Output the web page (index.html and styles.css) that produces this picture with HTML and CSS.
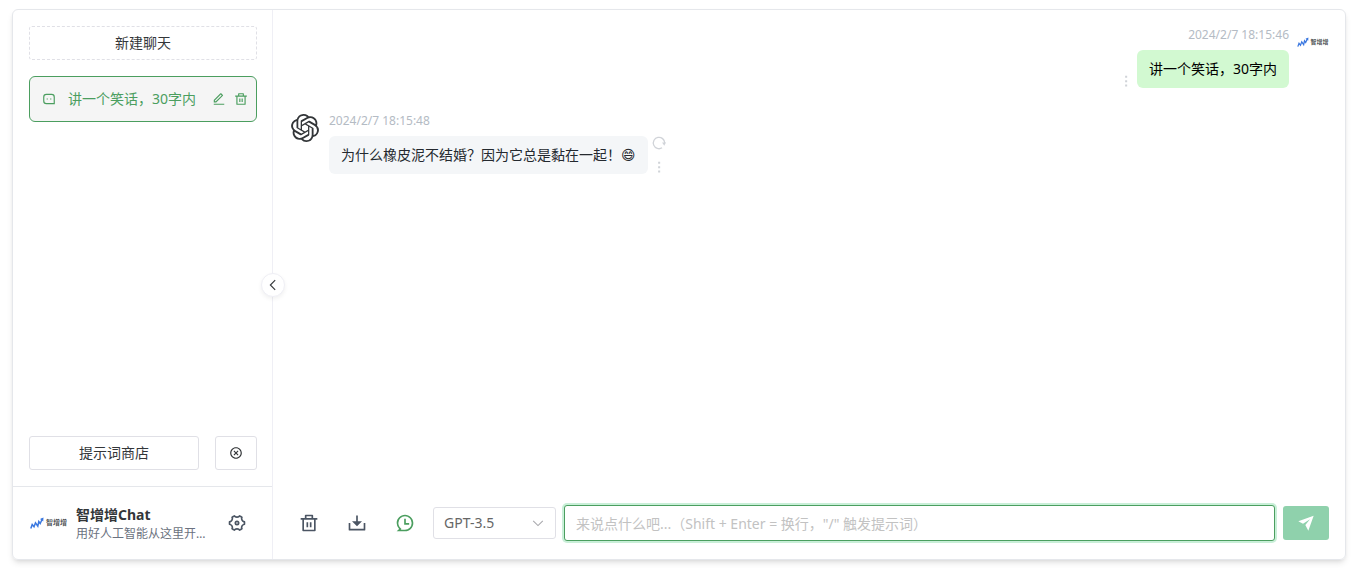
FILE: index.html
```html
<!DOCTYPE html>
<html lang="zh-CN">
<head>
  <meta charset="UTF-8">
  <meta name="viewport" content="width=device-width, initial-scale=1">
  <title>智增增Chat</title>
  <link rel="stylesheet" href="styles.css">
</head>
<body>
  <!-- shared icons -->
  <svg class="sprite" aria-hidden="true">
    <symbol id="icon-trash" viewBox="0 0 24 24">
      <path d="M17 6h5v2h-2v13a1 1 0 0 1-1 1H5a1 1 0 0 1-1-1V8H2V6h5V3a1 1 0 0 1 1-1h8a1 1 0 0 1 1 1v3Zm1 2H6v12h12V8Zm-9 3h2v6H9v-6Zm4 0h2v6h-2v-6ZM9 4v2h6V4H9Z"/>
    </symbol>
    <symbol id="icon-more" viewBox="0 0 24 24">
      <path d="M10.500 3h3.500v3.500h-3.500zM10.500 10.500h3.500v3.500h-3.500zM10.500 18h3.500v3.500h-3.500z"/>
    </symbol>
    <symbol id="brand-mark" viewBox="0 0 14 12">
      <path d="M0.800 11.500 2.200 7.500 4 9.800 5.500 5.800 7.800 9.200 8.800 4.500 10.200 6.500 12.500 1.500" fill="none" stroke="#3b78e0" stroke-width="1.500"/>
      <path d="M10 2 13.500 0.500 13.200 4.500Z" fill="#3b78e0"/>
    </symbol>
  </svg>

  <div class="app">
    <aside class="sidebar">
      <div class="sidebar-top">
        <button class="btn btn-dashed" type="button">新建聊天</button>
        <div class="chat-item">
          <svg class="icon" viewBox="0 0 24 24"><path d="M2 8.500A5.500 5.500 0 0 1 7.500 3h9A5.500 5.500 0 0 1 22 8.500V21H7.500A5.500 5.500 0 0 1 2 15.500v-7ZM20 19V8.500A3.500 3.500 0 0 0 16.500 5h-9A3.500 3.500 0 0 0 4 8.500v7A3.500 3.500 0 0 0 7.500 19H20Zm-6-8h2v2h-2v-2Zm-6 0h2v2H8v-2Z"/></svg>
          <a class="chat-title" href="#">讲一个笑话，30字内</a>
          <div class="chat-tools">
            <button class="icon-btn" type="button" aria-label="编辑">
              <svg class="icon" viewBox="0 0 24 24"><path d="M6.414 16 16.556 5.858l-1.414-1.414L5 14.586V16h1.414Zm.829 2H3v-4.243L14.435 2.322a1 1 0 0 1 1.414 0l2.829 2.829a1 1 0 0 1 0 1.414L7.243 18ZM3 20h18v2H3v-2Z"/></svg>
            </button>
            <button class="icon-btn" type="button" aria-label="删除">
              <svg class="icon"><use href="#icon-trash"/></svg>
            </button>
          </div>
        </div>
      </div>

      <div class="sidebar-actions">
        <button class="btn btn-store" type="button">提示词商店</button>
        <button class="btn btn-clear" type="button" aria-label="清空">
          <svg class="icon" viewBox="0 0 24 24"><path d="M12 22C6.477 22 2 17.523 2 12S6.477 2 12 2s10 4.477 10 10-4.477 10-10 10Zm0-2a8 8 0 1 0 0-16 8 8 0 0 0 0 16Zm0-9.414 2.828-2.829 1.415 1.415L13.414 12l2.829 2.828-1.415 1.415L12 13.414l-2.828 2.829-1.415-1.415L10.586 12 7.757 9.172l1.415-1.415L12 10.586Z"/></svg>
        </button>
      </div>

      <div class="sidebar-footer">
        <div class="brand brand-lg">
          <svg class="brand-mark"><use href="#brand-mark"/></svg>
          <span>智增增</span>
        </div>
        <div class="user-info">
          <div class="user-name">智增增Chat</div>
          <div class="user-desc">用好人工智能从这里开始吧</div>
        </div>
        <button class="tool-btn" type="button" aria-label="设置">
          <svg class="icon-lg" viewBox="0 0 24 24"><path d="M2 12c0-.865.11-1.703.316-2.504A3 3 0 0 0 4.990 4.867a9.990 9.990 0 0 1 4.335-2.505 3 3 0 0 0 5.348 0 9.990 9.990 0 0 1 4.335 2.505 3 3 0 0 0 2.675 4.630c.206.8.316 1.638.316 2.503 0 .864-.11 1.702-.316 2.503a3 3 0 0 0-2.675 4.629 9.990 9.990 0 0 1-4.335 2.505 3 3 0 0 0-5.348 0 9.990 9.990 0 0 1-4.335-2.505 3 3 0 0 0-2.675-4.630C2.110 13.703 2 12.864 2 12Zm4.804 3c.63 1.091.81 2.346.564 3.524.408.29.842.541 1.297.75A4.993 4.993 0 0 1 12 18c1.260 0 2.438.471 3.335 1.274.455-.209.889-.46 1.297-.75A4.990 4.990 0 0 1 17.196 15a4.993 4.993 0 0 1 2.770-2.250 8.126 8.126 0 0 0 0-1.500A4.993 4.993 0 0 1 17.195 9a4.990 4.990 0 0 1-.564-3.524 7.989 7.989 0 0 0-1.297-.75A4.993 4.993 0 0 1 12 6a4.993 4.993 0 0 1-3.335-1.274 7.990 7.990 0 0 0-1.297.75A4.990 4.990 0 0 1 6.804 9a4.993 4.993 0 0 1-2.770 2.250 8.126 8.126 0 0 0 0 1.500A4.993 4.993 0 0 1 6.805 15ZM12 15a3 3 0 1 1 0-6 3 3 0 0 1 0 6Zm0-2a1 1 0 1 0 0-2 1 1 0 0 0 0 2Z"/></svg>
        </button>
      </div>

      <button class="collapse-btn" type="button" aria-label="收起">
        <svg class="icon" viewBox="0 0 16 16"><path d="M10.500 2.500 5 8l5.500 5.500" fill="none" stroke="currentColor" stroke-width="1.300"/></svg>
      </button>
    </aside>

    <main class="main">
      <div class="messages">
        <div class="message message-user">
          <div class="avatar">
            <div class="brand">
              <svg class="brand-mark"><use href="#brand-mark"/></svg>
              <span>智增增</span>
            </div>
          </div>
          <div class="message-body">
            <time class="message-time">2024/2/7 18:15:46</time>
            <div class="message-row">
              <div class="bubble">讲一个笑话，30字内</div>
              <div class="message-tools">
                <button class="icon-btn" type="button" aria-label="更多"><svg class="icon"><use href="#icon-more"/></svg></button>
              </div>
            </div>
          </div>
        </div>

        <div class="message">
          <div class="avatar">
            <svg class="gpt-logo" viewBox="0 0 24 24"><path d="M22.2819 9.8211a5.9847 5.9847 0 0 0-.5157-4.9108 6.0462 6.0462 0 0 0-6.5098-2.9A6.0651 6.0651 0 0 0 4.9807 4.1818a5.9847 5.9847 0 0 0-3.9977 2.9 6.0462 6.0462 0 0 0 .7427 7.0966 5.98 5.98 0 0 0 .511 4.9107 6.051 6.051 0 0 0 6.5146 2.9001A5.9847 5.9847 0 0 0 13.2599 24a6.0557 6.0557 0 0 0 5.7718-4.2058 5.9894 5.9894 0 0 0 3.9977-2.9001 6.0557 6.0557 0 0 0-.7475-7.0729zm-9.022 12.6081a4.4755 4.4755 0 0 1-2.8764-1.0408l.1419-.0804 4.7783-2.7582a.7948.7948 0 0 0 .3927-.6813v-6.7369l2.02 1.1686a.071.071 0 0 1 .038.052v5.5826a4.504 4.504 0 0 1-4.4945 4.4944zm-9.6607-4.1254a4.4708 4.4708 0 0 1-.5346-3.0137l.142.0852 4.783 2.7582a.7712.7712 0 0 0 .7806 0l5.8428-3.3685v2.3324a.0804.0804 0 0 1-.0332.0615L9.74 19.9502a4.4992 4.4992 0 0 1-6.1408-1.6464zM2.3408 7.8956a4.485 4.485 0 0 1 2.3655-1.9728V11.6a.7664.7664 0 0 0 .3879.6765l5.8144 3.3543-2.0201 1.1685a.0757.0757 0 0 1-.071 0l-4.8303-2.7865A4.504 4.504 0 0 1 2.3408 7.872zm16.5963 3.8558L13.1038 8.364 15.1192 7.2a.0757.0757 0 0 1 .071 0l4.8303 2.7913a4.4944 4.4944 0 0 1-.6765 8.1042v-5.6772a.79.79 0 0 0-.407-.667zm2.0107-3.0231l-.142-.0852-4.7735-2.7818a.7759.7759 0 0 0-.7854 0L9.409 9.2297V6.8974a.0662.0662 0 0 1 .0284-.0615l4.8303-2.7866a4.4992 4.4992 0 0 1 6.6802 4.66zM8.3065 12.863l-2.02-1.1638a.0804.0804 0 0 1-.038-.0567V6.0742a4.4992 4.4992 0 0 1 7.3757-3.4537l-.142.0805L8.704 5.459a.7948.7948 0 0 0-.3927.6813zm1.0976-2.3654l2.602-1.4998 2.6069 1.4998v2.9994l-2.5974 1.4997-2.6067-1.4997Z"/></svg>
          </div>
          <div class="message-body">
            <time class="message-time">2024/2/7 18:15:48</time>
            <div class="message-row">
              <div class="bubble">为什么橡皮泥不结婚？因为它总是黏在一起！<span class="emoji">😄</span></div>
              <div class="message-tools">
                <button class="icon-btn" type="button" aria-label="重新生成">
                  <svg class="icon" viewBox="0 0 16 16"><path d="M11.500 13.500A6.500 6.500 0 1 1 14.500 8" fill="none" stroke="currentColor" stroke-width="1.500"/><path d="M11.500 7.500h4.500L14 11Z"/></svg>
                </button>
                <button class="icon-btn" type="button" aria-label="更多"><svg class="icon"><use href="#icon-more"/></svg></button>
              </div>
            </div>
          </div>
        </div>
      </div>

      <form class="composer">
        <button class="tool-btn" type="button" aria-label="清空会话"><svg class="icon-lg"><use href="#icon-trash"/></svg></button>
        <button class="tool-btn" type="button" aria-label="导出">
          <svg class="icon-lg" viewBox="0 0 24 24"><path d="M13 10h5l-6 6-6-6h5V3h2v7Zm-9 9h16v-7h2v8a1 1 0 0 1-1 1H3a1 1 0 0 1-1-1v-8h2v7Z"/></svg>
        </button>
        <button class="tool-btn tool-btn-active" type="button" aria-label="上下文">
          <svg class="icon-lg" viewBox="0 0 24 24"><path d="M12 2c5.523 0 10 4.477 10 10s-4.477 10-10 10H2l2.929-2.929A9.969 9.969 0 0 1 2 12C2 6.477 6.477 2 12 2Zm0 2a8 8 0 0 0-8 8c0 2.152.851 4.165 2.343 5.657l1.414 1.414-.929.929H12a8 8 0 1 0 0-16Zm1 3v5h4v2h-6V7h2Z"/></svg>
        </button>
        <div class="model-select">
          <select aria-label="模型">
            <option>GPT-3.5</option>
          </select>
          <svg class="icon" viewBox="0 0 16 16"><path d="M2.500 5.500 8 11 13.500 5.500" fill="none" stroke="currentColor" stroke-width="1.200"/></svg>
        </div>
        <input class="prompt" type="text" aria-label="消息" placeholder='来说点什么吧...（Shift + Enter = 换行，"/" 触发提示词）'>
        <button class="send" type="submit" aria-label="发送">
          <svg class="icon-send" viewBox="0 0 24 24"><path d="M23.500 1 0.500 9.500 7.500 13 18 6.500 11 15 15.500 23.500Z"/></svg>
        </button>
      </form>
    </main>
  </div>
</body>
</html>
```

FILE: styles.css
```css
* {
  box-sizing: border-box;
}

body {
  margin: 0;
  height: 100vh;
  padding: 9px 5px 8px 12px;
  background: #fff;
  color: #333639;
  font-family: "Noto Sans", "Noto Sans CJK SC", sans-serif;
  font-size: 14px;
  line-height: 22px;
}

button, input, select {
  margin: 0;
  padding: 0;
  font: inherit;
  color: inherit;
}

button {
  display: flex;
  align-items: center;
  justify-content: center;
  background: none;
  border: none;
  cursor: pointer;
}

svg {
  display: block;
  fill: currentColor;
}

.sprite {
  position: absolute;
  width: 0;
  height: 0;
}

.icon {
  width: 14px;
  height: 14px;
}

.icon-lg {
  width: 20px;
  height: 20px;
}

.app {
  display: flex;
  height: 100%;
  border: 1px solid #e5e7eb;
  border-radius: 6px;
  box-shadow: 0 4px 6px -1px rgba(0, 0, 0, 0.1), 0 2px 4px -2px rgba(0, 0, 0, 0.1);
}

/* sidebar */
.sidebar {
  position: relative;
  display: flex;
  flex-direction: column;
  flex: none;
  width: 260px;
  border-right: 1px solid #efeff5;
}

.sidebar-top {
  display: flex;
  flex: 1;
  flex-direction: column;
  gap: 16px;
  padding: 16px 15px 16px 16px;
}

.btn {
  height: 34px;
  border: 1px solid #e0e0e6;
  border-radius: 3px;
}

.btn-dashed {
  border-style: dashed;
}

.chat-item {
  display: flex;
  align-items: center;
  height: 46px;
  padding: 0 8px 0 12px;
  border: 1px solid #4b9e5f;
  border-radius: 6px;
  background: #f5f5f5;
  color: #4b9e5f;
}

.chat-title {
  flex: 1;
  margin-left: 12px;
  color: inherit;
  text-decoration: none;
  white-space: nowrap;
}

.chat-tools {
  display: flex;
  gap: 8px;
}

.sidebar-actions {
  display: flex;
  gap: 16px;
  padding: 16px 15px 16px 16px;
}

.btn-store {
  flex: 1;
}

.btn-clear {
  width: 42px;
}

.sidebar-footer {
  display: flex;
  align-items: center;
  height: 73px;
  padding: 0 15px 0 16px;
  border-top: 1px solid #e5e7eb;
}

.brand {
  display: flex;
  align-items: center;
  gap: 1px;
  font-size: 6px;
  line-height: 8px;
  font-weight: 500;
  white-space: nowrap;
}

.brand-mark {
  width: 12px;
  height: 10px;
}

.brand-lg {
  gap: 2px;
  padding-left: 1px;
  margin-right: 9px;
  font-size: 7px;
}

.brand-lg .brand-mark {
  width: 14px;
  height: 12px;
}

.user-info {
  flex: 1;
  min-width: 0;
  padding-top: 2px;
}

.user-name {
  font-weight: 700;
  line-height: 20px;
}

.user-desc {
  overflow: hidden;
  color: #6b7280;
  font-size: 12px;
  line-height: 18px;
  text-overflow: ellipsis;
  white-space: nowrap;
}

.tool-btn {
  flex: none;
  width: 40px;
  height: 40px;
  color: #4b5563;
}

.tool-btn-active {
  color: #4b9e5f;
}

.collapse-btn {
  position: absolute;
  top: 50%;
  right: -13px;
  width: 24px;
  height: 24px;
  border: 1px solid #efeff5;
  border-radius: 50%;
  background: #fff;
  box-shadow: 0 2px 4px rgba(0, 0, 0, 0.06);
  transform: translateY(-50%);
}

/* conversation */
.main {
  display: flex;
  flex: 1;
  flex-direction: column;
  min-width: 0;
}

.messages {
  display: flex;
  flex: 1;
  flex-direction: column;
  gap: 24px;
  padding: 16px;
}

.message {
  display: flex;
  gap: 8px;
}

.message-user {
  flex-direction: row-reverse;
}

.avatar {
  display: flex;
  align-items: center;
  justify-content: center;
  flex: none;
  width: 32px;
  height: 32px;
}

.gpt-logo {
  width: 28px;
  height: 28px;
}

.message-body {
  display: flex;
  flex-direction: column;
  align-items: flex-start;
  gap: 6px;
}

.message-user .message-body {
  align-items: flex-end;
}

.message-time {
  color: #b4bbc4;
  font-size: 12px;
  line-height: 18px;
}

.message-row {
  display: flex;
  gap: 3px;
}

.message-user .message-row {
  flex-direction: row-reverse;
}

.bubble {
  padding: 8px 12px;
  border-radius: 6px;
  background: #f4f6f8;
  color: #24292f;
}

.message-user .bubble {
  background: #d2f9d1;
  color: #000;
}

.emoji {
  font-family: "DejaVu Sans", sans-serif;
}

.message-tools {
  display: flex;
  flex-direction: column;
  justify-content: space-between;
  width: 16px;
  color: #d0d3d8;
}

.message-tools .icon-btn:last-child {
  margin-top: auto;
}

/* composer */
.composer {
  display: flex;
  align-items: center;
  gap: 8px;
  height: 72px;
  padding: 0 16px;
}

.model-select {
  position: relative;
  flex: none;
  width: 123px;
  color: #666;
}

.model-select select {
  display: block;
  width: 100%;
  height: 32px;
  padding: 0 10px;
  border: 1px solid #e0e0e6;
  border-radius: 3px;
  background: #fff;
  appearance: none;
}

.model-select .icon {
  position: absolute;
  top: 9px;
  right: 11px;
  color: #a8a8ac;
  pointer-events: none;
}

.prompt {
  flex: 1;
  min-width: 0;
  height: 36px;
  padding: 0 11px;
  border: 1px solid #4b9e5f;
  border-radius: 3px;
  outline: none;
  box-shadow: 0 0 0 2px #c9efd8;
}

.prompt::placeholder {
  color: #c2c2c2;
}

.send {
  width: 46px;
  height: 34px;
  border-radius: 3px;
  background: #8fd1ac;
  color: #fff;
}

.icon-send {
  width: 16px;
  height: 16px;
}
```
